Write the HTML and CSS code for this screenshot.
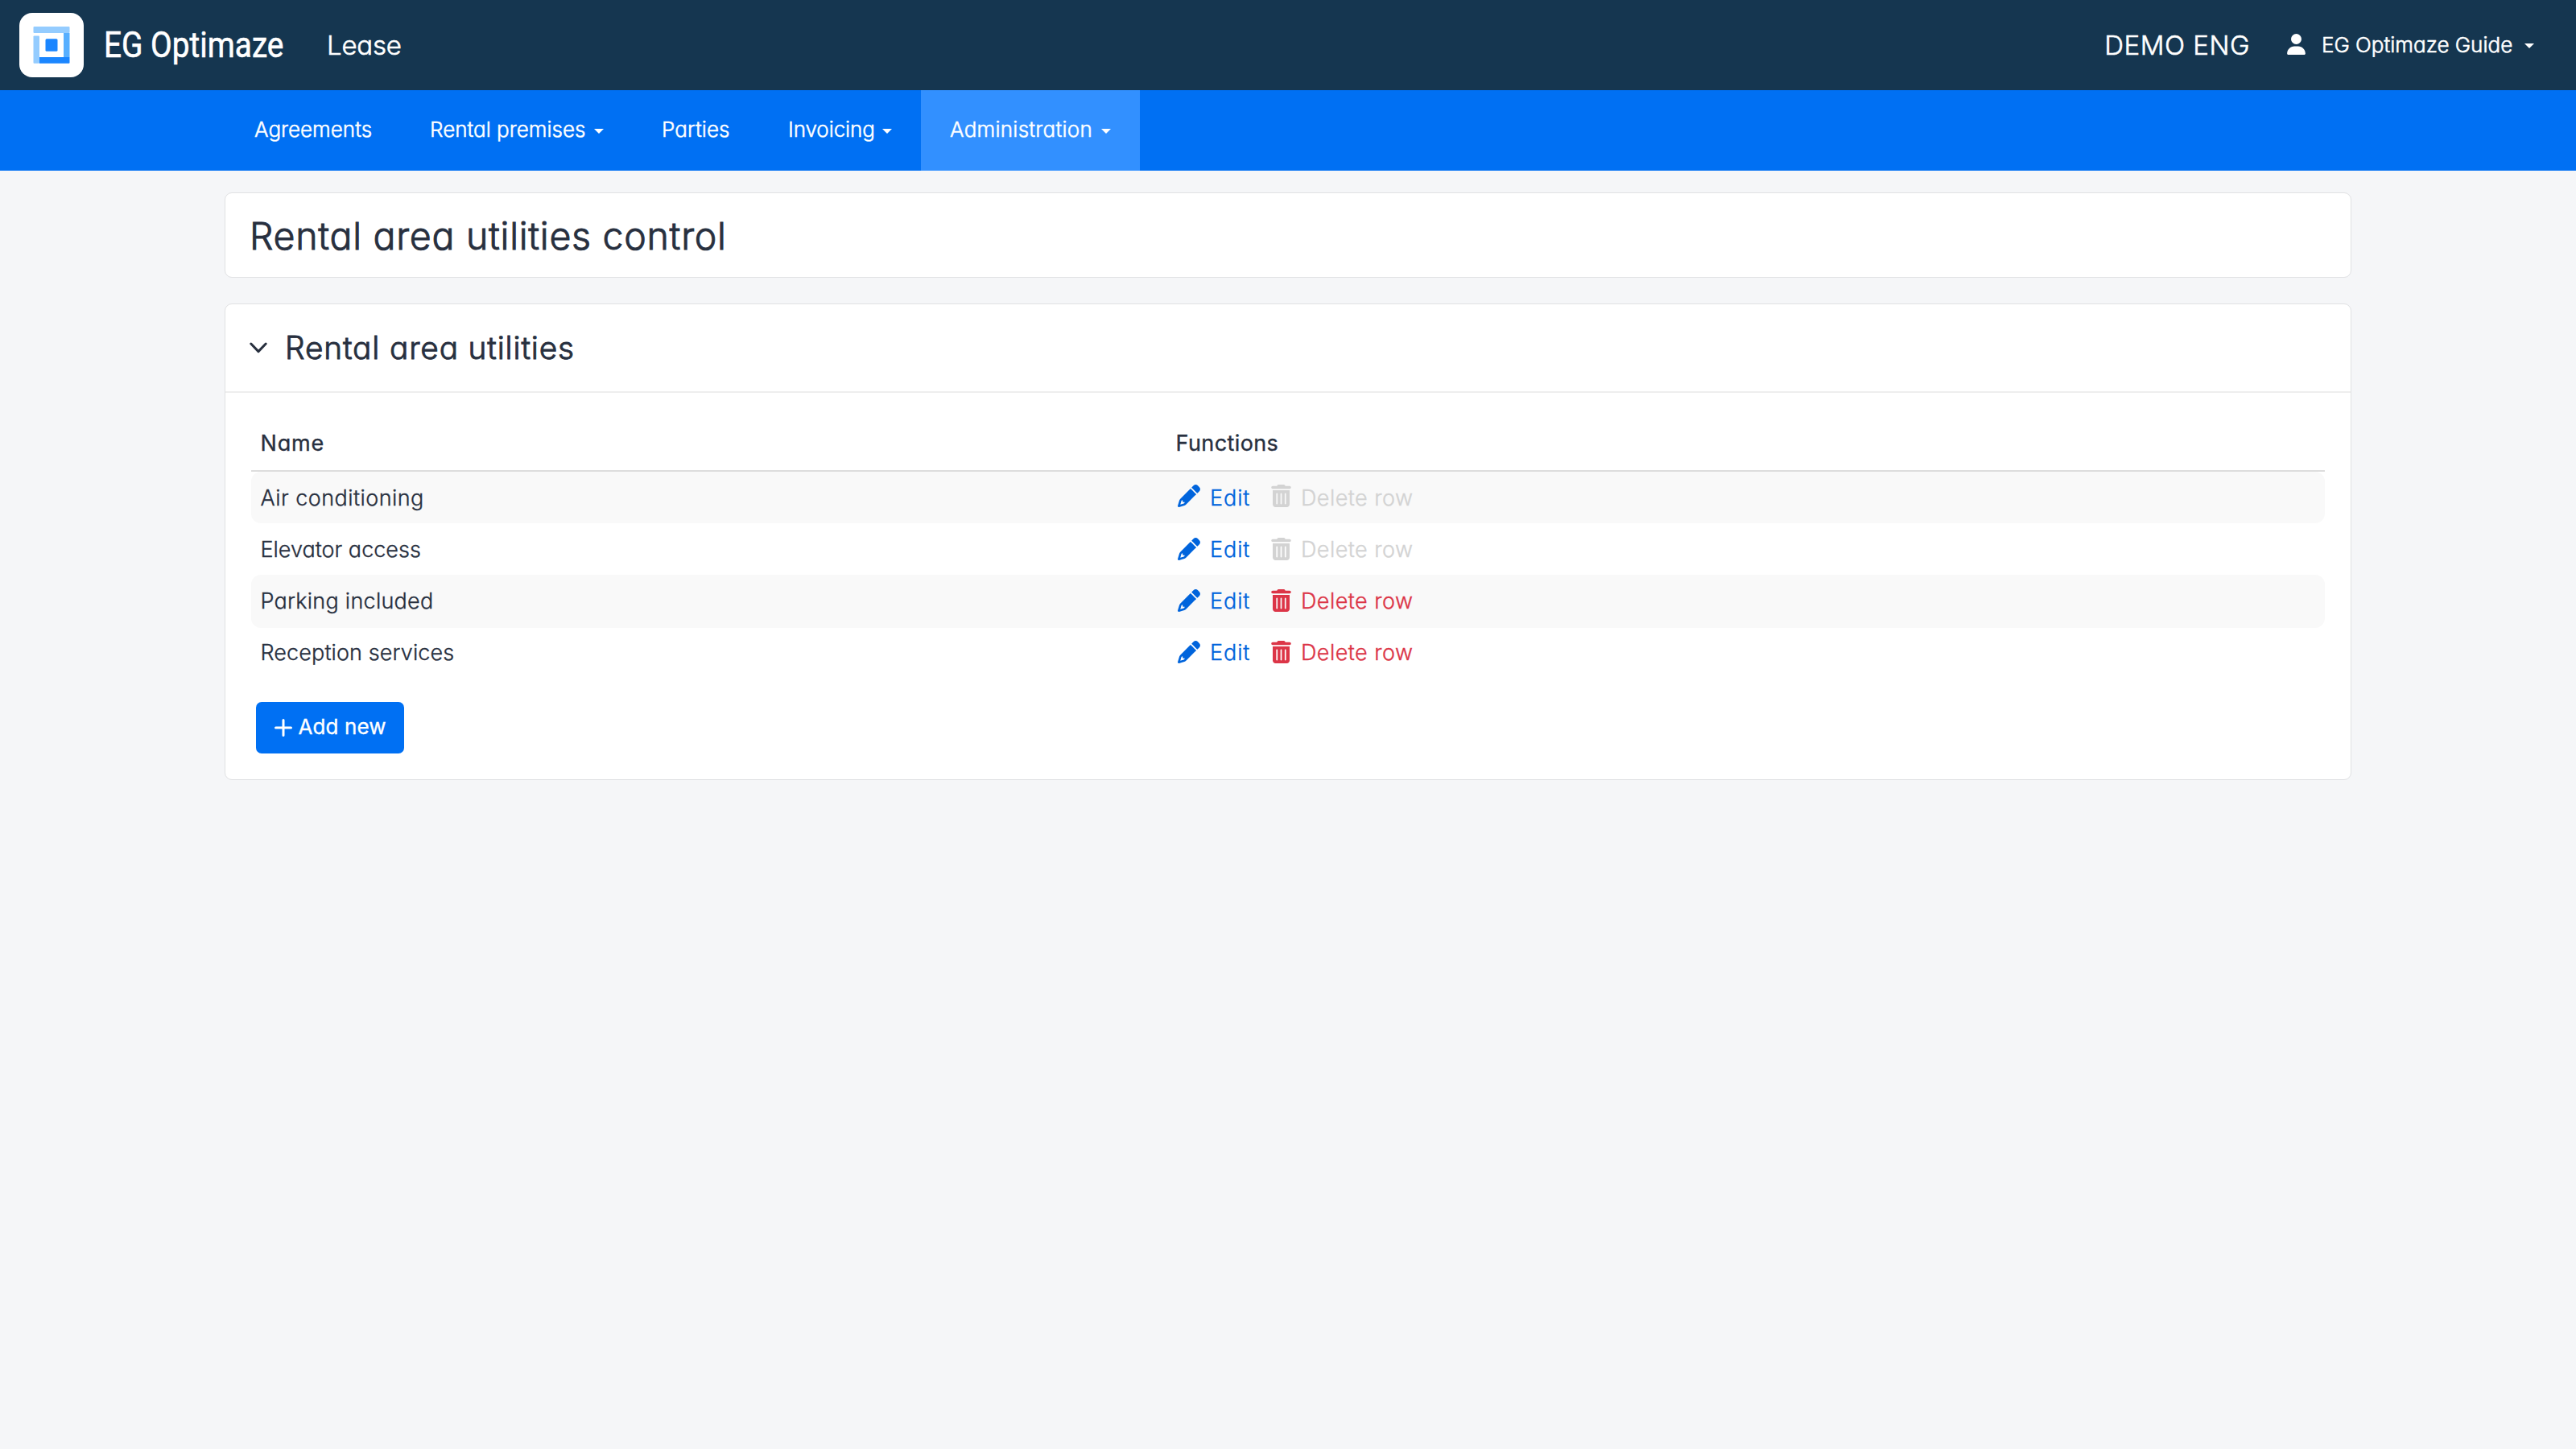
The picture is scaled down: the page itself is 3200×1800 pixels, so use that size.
FILE: index.html
```html
<!DOCTYPE html>
<html lang="en">
<head>
<meta charset="utf-8">
<title>Rental area utilities control</title>
<link rel="stylesheet" href="styles.css">
</head>
<body>
<svg class="sprite" aria-hidden="true">
  <symbol id="pencil" viewBox="0 0 512 512"><path d="M410.3 231l11.3-11.3-33.9-33.9-62.1-62.1L291.7 89.8l-11.3 11.3-22.6 22.6L58.6 322.9c-10.4 10.4-18 23.3-22.2 37.4L1 480.7c-2.5 8.4-.2 17.5 6.1 23.7s15.3 8.5 23.7 6.1l120.3-35.4c14.1-4.2 27-11.8 37.4-22.2L387.7 253.7 410.3 231zM160 399.4l-9.1 22.7c-4 3.1-8.5 5.4-13.3 6.9L59.4 452l23-78.1c1.4-4.9 3.8-9.4 6.9-13.3l22.7-9.1v32c0 8.8 7.2 16 16 16h32zM362.7 18.7L348.3 33.2 325.7 55.8 314.3 67.1l33.9 33.9 62.1 62.1 33.9 33.9 11.3-11.3 22.6-22.6 14.5-14.5c25-25 25-65.5 0-90.5L453.3 18.7c-25-25-65.5-25-90.5 0z"/></symbol>
  <symbol id="trash" viewBox="0 0 448 512"><path d="M135.2 17.7C140.6 6.8 151.7 0 163.8 0H284.2c12.1 0 23.2 6.8 28.6 17.7L320 32h96c17.7 0 32 14.3 32 32s-14.3 32-32 32H32C14.3 96 0 81.7 0 64S14.3 32 32 32h96zM32 128H416V448c0 35.3-28.7 64-64 64H96c-35.3 0-64-28.7-64-64zm96 64c-8.8 0-16 7.2-16 16V432c0 8.8 7.2 16 16 16s16-7.2 16-16V208c0-8.8-7.2-16-16-16zm96 0c-8.8 0-16 7.2-16 16V432c0 8.8 7.2 16 16 16s16-7.2 16-16V208c0-8.8-7.2-16-16-16zm96 0c-8.8 0-16 7.2-16 16V432c0 8.8 7.2 16 16 16s16-7.2 16-16V208c0-8.8-7.2-16-16-16z" fill-rule="evenodd"/></symbol>
</svg>

<header class="topbar">
  <svg class="logo" viewBox="0 0 80 80">
    <rect width="80" height="80" rx="16" fill="#fff"/>
    <rect x="17.5" y="17" width="45" height="8" rx="1" fill="#94ccff"/>
    <rect x="17.5" y="28.5" width="7.5" height="34.2" rx="1" fill="#94ccff"/>
    <rect x="55" y="25" width="7.5" height="30" fill="#57afff"/>
    <path d="M25 55h37.5v6.7q0 1-1 1H25z" fill="#1b86ff"/>
    <rect x="32.5" y="32.2" width="15" height="15.5" rx="1.5" fill="#1b86ff"/>
  </svg>
  <div class="brand"><span class="brand-name">EG Optimaze</span></div>
  <span class="module">Lease</span>
  <span class="tenant">DEMO ENG</span>
  <div class="user">
    <svg class="user-icon" viewBox="0 0 448 512"><path d="M224 256A128 128 0 1 0 224 0a128 128 0 1 0 0 256zm-45.7 48C79.8 304 0 383.8 0 482.3C0 498.7 13.3 512 29.7 512H418.3c16.4 0 29.7-13.3 29.7-29.7C448 383.8 368.2 304 269.7 304H178.3z"/></svg>
    <span class="user-name">EG Optimaze Guide</span>
    <span class="caret"></span>
  </div>
</header>

<nav class="nav">
  <a class="nav-item agreements">Agreements</a>
  <a class="nav-item premises">Rental premises<span class="caret"></span></a>
  <a class="nav-item parties">Parties</a>
  <a class="nav-item invoicing">Invoicing<span class="caret"></span></a>
  <a class="nav-item administration active">Administration<span class="caret"></span></a>
</nav>

<main class="content">
  <section class="card title-card"><h1 class="title">Rental area utilities control</h1></section>
  <section class="card">
    <div class="card-head">
      <svg class="chevron" viewBox="0 0 22 14"><path d="M1.8 2 11 11.6 20.2 2"/></svg>
      <h2 class="subtitle">Rental area utilities</h2>
    </div>
    <div class="card-body">
      <div class="table">
        <div class="row head"><span class="name-head">Name</span><span class="functions-head">Functions</span></div>
        <div class="row striped">
          <span class="air">Air conditioning</span>
          <div class="actions raised">
            <a class="action edit"><svg class="pencil"><use href="#pencil"/></svg><span class="edit-label">Edit</span></a>
            <a class="action disabled"><svg class="trash"><use href="#trash"/></svg><span class="delete-label">Delete row</span></a>
          </div>
        </div>
        <div class="row">
          <span>Elevator access</span>
          <div class="actions">
            <a class="action edit"><svg class="pencil"><use href="#pencil"/></svg><span class="edit-label">Edit</span></a>
            <a class="action disabled"><svg class="trash"><use href="#trash"/></svg><span class="delete-label">Delete row</span></a>
          </div>
        </div>
        <div class="row striped tall">
          <span class="parking">Parking included</span>
          <div class="actions">
            <a class="action edit"><svg class="pencil"><use href="#pencil"/></svg><span class="edit-label">Edit</span></a>
            <a class="action delete"><svg class="trash"><use href="#trash"/></svg><span class="delete-label">Delete row</span></a>
          </div>
        </div>
        <div class="row last">
          <span class="reception">Reception services</span>
          <div class="actions">
            <a class="action edit"><svg class="pencil"><use href="#pencil"/></svg><span class="edit-label">Edit</span></a>
            <a class="action delete"><svg class="trash"><use href="#trash"/></svg><span class="delete-label">Delete row</span></a>
          </div>
        </div>
      </div>
      <button class="add"><svg class="plus" viewBox="0 0 22 22"><path d="M11 1.5v19M1.5 11h19"/></svg><span>Add new</span></button>
    </div>
  </section>
</main>
</body>
</html>
```
FILE: styles.css
```css
* { box-sizing: border-box; }

body {
  margin: 0;
  min-height: 1800px;
  background: #f5f6f8;
  color: #28303f;
  font-family: Inter, "Noto Sans", sans-serif;
  font-size: 27px;
  font-weight: 300;
  font-feature-settings: "cv11";
  -webkit-text-stroke: 0.35px currentColor;
  white-space: nowrap;
}

.sprite { display: none; }
svg { flex: none; fill: currentColor; }

.topbar {
  display: flex;
  align-items: center;
  height: 112px;
  padding: 0 52px 0 24px;
  background: #153650;
  color: #fff;
  font-size: 33px;
  -webkit-text-stroke-width: 0.6px;
}
.logo { width: 80px; height: 80px; }
.brand { width: 302px; padding-left: 25px; }
.brand-name {
  display: inline-block;
  font-family: Roboto, sans-serif;
  font-size: 44px;
  font-weight: 400;
  transform: scaleX(0.882);
  transform-origin: left;
}
.module { letter-spacing: -0.2px; }
.tenant { margin-left: auto; letter-spacing: 0.5px; }
.user {
  display: flex;
  align-items: center;
  width: 307px;
  margin-left: 46px;
  padding-bottom: 2px;
  font-size: 26px;
}
.user-icon { width: 23px; height: 26px; }
.user-name { margin-left: 20px; }
.user .caret { margin: 4px 0 0 auto; }

.caret {
  display: block;
  width: 12px;
  height: 6px;
  background: currentColor;
  clip-path: polygon(0 0, 100% 0, 50% 100%);
}

.nav {
  display: flex;
  height: 100px;
  padding-left: 280px;
  background: #0070f3;
  color: #fff;
  font-size: 26px;
  -webkit-text-stroke-width: 0.5px;
}
.nav-item {
  display: flex;
  align-items: center;
  justify-content: space-between;
  padding: 0 36px 3px;
}
.nav-item .caret { margin-top: 5px; }
.agreements { width: 218px; }
.premises { width: 288px; }
.parties { width: 157px; letter-spacing: 0.1px; }
.invoicing { width: 201px; letter-spacing: -0.1px; }
.administration { width: 272px; letter-spacing: 0.25px; }
.active { background: #3290ff; }

.content {
  display: flex;
  flex-direction: column;
  gap: 32px;
  width: 2642px;
  margin: 0 auto;
  padding-top: 27px;
}
.card {
  background: #fff;
  border: 1px solid #e0e1e3;
  border-radius: 9px;
}
.title-card {
  display: flex;
  align-items: center;
  height: 106px;
  padding: 2px 30px 0;
}
.title {
  margin: 0;
  font-size: 46.5px;
  font-weight: 300;
  letter-spacing: 0.7px;
  -webkit-text-stroke-width: 0.9px;
}
.card-head {
  display: flex;
  align-items: center;
  height: 110px;
  padding-left: 30px;
  border-bottom: 2px solid #eee;
}
.chevron {
  width: 22px;
  height: 14px;
  fill: none;
  stroke: currentColor;
  stroke-width: 3;
  stroke-linecap: round;
  stroke-linejoin: round;
}
.subtitle {
  margin: 0 0 0 22px;
  padding-bottom: 2px;
  font-size: 38.8px;
  font-weight: 300;
  letter-spacing: 0.85px;
  -webkit-text-stroke-width: 0.9px;
}
.card-body { padding: 28px 32px 32px; }

.row {
  display: grid;
  grid-template-columns: 1137px 1fr;
  align-items: center;
  height: 64px;
  padding-left: 11.5px;
  border-radius: 12px;
}
.head {
  height: 70px;
  border-bottom: 2px solid #ddd;
  border-radius: 0;
  font-weight: 400;
}
.striped { background: #f9f9f9; }
.tall { height: 66px; padding-bottom: 2px; }
.last { padding-bottom: 4px; }
.name-head { letter-spacing: 0.8px; }
.functions-head { letter-spacing: 0.4px; }
.air { letter-spacing: 0.45px; }
.parking { letter-spacing: 0.25px; }
.reception { letter-spacing: 0.1px; }

.actions {
  display: grid;
  grid-template-columns: 116px auto;
  justify-content: start;
  padding-left: 2.5px;
}
.action { display: flex; align-items: center; }
.edit { color: #0064dc; }
.delete { color: #dc3547; }
.disabled { color: #d3d3d3; }
.pencil { width: 28px; height: 28px; }
.trash { width: 25px; height: 28px; }
.raised svg { margin-bottom: 4px; }
.edit-label { margin-left: 12px; letter-spacing: 0.9px; }
.delete-label { margin-left: 12px; letter-spacing: 0.45px; }

.add {
  display: flex;
  align-items: center;
  gap: 8px;
  width: 184px;
  height: 64px;
  margin: 28px 0 0 6px;
  padding: 0 0 0 22.5px;
  border: 0;
  border-radius: 7px;
  background: #0070f3;
  color: #fff;
  font: inherit;
  font-size: 26px;
  font-weight: 400;
  letter-spacing: 0.1px;
}
.add span { padding-bottom: 3px; }
.plus {
  width: 22px;
  height: 22px;
  fill: none;
  stroke: currentColor;
  stroke-width: 3;
  stroke-linecap: round;
}
```
